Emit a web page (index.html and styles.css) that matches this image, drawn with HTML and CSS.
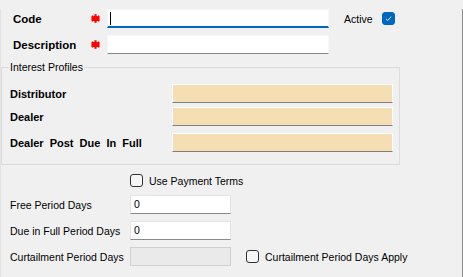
FILE: index.html
```html
<!DOCTYPE html>
<html>

<head>
    <meta charset="utf-8">
    <title>Interest Terms</title>
    <link rel="stylesheet" href="styles.css">
</head>

<body>
    <div class="form">
        <div class="head-row row-code">
            <span class="key">Code</span>
            <svg class="req" viewBox="0 0 9 9"><path d="M4.5 0.3V8.7M0.6 2.3L8.4 6.7M0.6 6.7L8.4 2.3M0.5 4.5H8.5" /></svg>
            <div class="box head-box focus"><span class="caret"></span></div>
            <span class="active-label">Active</span>
            <span class="check on"><svg viewBox="0 0 13 13"><path d="M3.5 6.8L5.6 8.8L9.6 4.4" /></svg></span>
        </div>
        <div class="head-row row-desc">
            <span class="key">Description</span>
            <svg class="req" viewBox="0 0 9 9"><path d="M4.5 0.3V8.7M0.6 2.3L8.4 6.7M0.6 6.7L8.4 2.3M0.5 4.5H8.5" /></svg>
            <div class="box head-box"></div>
        </div>

        <fieldset class="group">
            <legend>Interest Profiles</legend>
            <div class="profile-row first">
                <span class="profile-label">Distributor</span>
                <div class="box wheat"></div>
            </div>
            <div class="profile-row second">
                <span class="profile-label">Dealer</span>
                <div class="box wheat"></div>
            </div>
            <div class="profile-row third">
                <span class="profile-label">Dealer Post Due In Full</span>
                <div class="box wheat"></div>
            </div>
        </fieldset>

        <div class="terms-row">
            <span class="check"></span>
            <span class="check-text">Use Payment Terms</span>
        </div>

        <div class="field-row">
            <span class="field-label">Free Period Days</span>
            <div class="box num">0</div>
        </div>
        <div class="field-row">
            <span class="field-label">Due in Full Period Days</span>
            <div class="box num">0</div>
        </div>
        <div class="field-row">
            <span class="field-label">Curtailment Period Days</span>
            <div class="box num disabled"></div>
            <span class="check apply"></span>
            <span class="check-text">Curtailment Period Days Apply</span>
        </div>
    </div>
</body>

</html>
```

FILE: styles.css
```css
/* colours picked from the dialog */
:root {
    --bg: #f0f0f0;
    --accent: #0067c0;
    --line: #dcdcdc;
    --underline: #7f7f7f;
    --wheat: #f5deb3;
}

body {
    margin: 0;
    background-color: var(--bg);
    font-family: "Liberation Sans", Arial, sans-serif;
    font-size: 10.5px;
    color: #000;
}

.form {
    width: 461px;
    height: 277px;
    border-left: 1px solid #e3e3e3;
    border-right: 1px solid #8c8c8c;
}

.box {
    box-sizing: border-box;
    height: 19px;
    background-color: #fff;
    border: 1px solid #ececec;
    border-bottom-color: var(--underline);
}

/* top rows */
.head-row {
    display: flex;
    align-items: center;
    height: 19px;
    padding-left: 12px;
}

.row-code {
    margin-top: 9px;
}

.row-desc {
    margin-top: 7px;
}

.key {
    width: 78px;
    font-weight: bold;
    font-size: 11.5px;
}

.req {
    width: 9px;
    height: 9px;
    margin-right: 7px;
    stroke: #ff0000;
    stroke-width: 2.2;
    fill: none;
}

.head-box {
    width: 222px;
    border-color: #f7f7f7;
    border-bottom-color: #868686;
    padding-left: 2px;
    display: flex;
    align-items: center;
}

.head-box.focus {
    border-bottom: 2px solid var(--accent);
}

.caret {
    width: 1px;
    height: 13px;
    background-color: #000;
}

.active-label {
    width: 38px;
    margin-left: 15px;
}

.check {
    box-sizing: border-box;
    display: inline-flex;
    width: 13px;
    height: 13px;
    border: 1px solid #333;
    border-radius: 3px;
    background-color: #f6f6f6;
}

.check.on {
    background-color: var(--accent);
    border-color: var(--accent);
}

.check svg {
    width: 11px;
    height: 11px;
    fill: none;
    stroke: #fff;
    stroke-width: 1;
}

/* interest profiles group */
.group {
    box-sizing: border-box;
    width: 399px;
    height: 104px;
    margin: 7px 0 0 0;
    padding: 0 5px 0 8px;
    border: 1px solid var(--line);
}

.group legend {
    padding: 0 1px;
    margin-left: -1px;
    line-height: 12px;
}

.profile-row {
    display: flex;
    align-items: center;
    height: 19px;
}

.profile-row.first {
    margin-top: 11px;
}

.profile-row.second {
    margin-top: 4px;
}

.profile-row.third {
    margin-top: 7px;
}

.profile-label {
    width: 162px;
    font-weight: bold;
    font-size: 11px;
    word-spacing: 3px;
}

.wheat {
    width: 221px;
    background-color: var(--wheat);
    border-color: #fff;
    border-bottom-color: var(--underline);
}

/* payment terms */
.terms-row {
    display: flex;
    align-items: center;
    height: 13px;
    margin-top: 9px;
    padding-left: 129px;
}

.check-text {
    margin-left: 6px;
}

.field-row {
    display: flex;
    align-items: center;
    height: 19px;
    margin-top: 7px;
    padding-left: 9px;
}

.terms-row + .field-row {
    margin-top: 8px;
}

.field-label {
    width: 120px;
}

.num {
    width: 101px;
    padding-left: 3px;
    line-height: 17px;
    border-color: #e4e4e4;
    border-bottom-color: #8a8a8a;
}

.num.disabled {
    background-color: #eaeaea;
    border-color: #cfcfcf;
}

.check.apply {
    margin-left: 15px;
}
```
